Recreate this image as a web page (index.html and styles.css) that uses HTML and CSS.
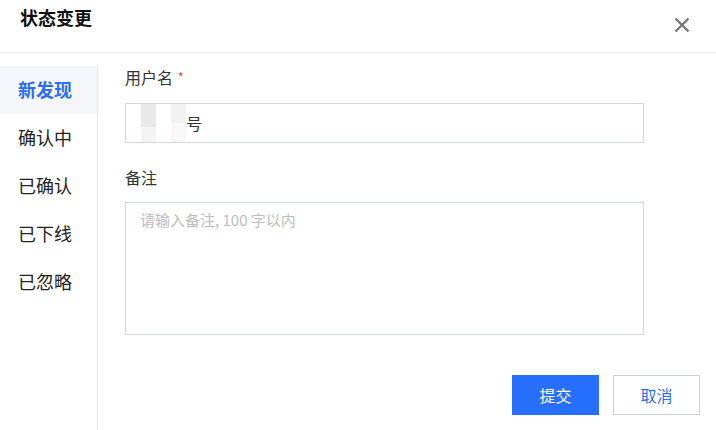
FILE: index.html
```html
<!DOCTYPE html>
<html lang="zh">
<head>
<meta charset="utf-8">
<title>状态变更</title>
<link rel="stylesheet" href="styles.css">
</head>
<body>
<div class="dialog">
  <div class="header">
    <div class="title">状态变更</div>
    <button class="close" aria-label="关闭">
      <svg width="16" height="16" viewBox="0 0 16 16"><path d="M1.5 1.5 L14.5 14.5 M14.5 1.5 L1.5 14.5" stroke="#777" stroke-width="2.4" stroke-linecap="butt" fill="none"/></svg>
    </button>
  </div>
  <div class="body">
    <div class="sidebar">
      <div class="tab active">新发现</div>
      <div class="tab">确认中</div>
      <div class="tab">已确认</div>
      <div class="tab">已下线</div>
      <div class="tab">已忽略</div>
    </div>
    <div class="main">
      <div class="label">用户名<span class="req">*</span></div>
      <div class="input">
        <span class="mask mask1"></span><span class="mask mask2"></span><span class="val">号</span>
      </div>
      <div class="label label2">备注</div>
      <div class="textarea"><span class="ph">请输入备注, 100 字以内</span></div>
      <div class="actions">
        <button class="btn primary">提交</button>
        <button class="btn secondary">取消</button>
      </div>
    </div>
  </div>
</div>
</body>
</html>
```
FILE: styles.css
```css
* { box-sizing: border-box; }
html, body { margin: 0; padding: 0; background: #fff; }
body {
  width: 716px;
  height: 430px;
  overflow: hidden;
  font-family: "PingFang SC", "Noto Sans CJK SC", "Noto Sans", sans-serif;
  color: #222;
}
.dialog { width: 716px; height: 430px; display: flex; flex-direction: column; }
.header {
  height: 53px;
  border-bottom: 1px solid #e7e9ee;
  display: flex;
  justify-content: space-between;
  align-items: flex-start;
  flex-shrink: 0;
}
.title {
  font-size: 18px;
  font-weight: 700;
  line-height: 26px;
  padding: 4px 0 0 20px;
  color: #111;
}
.close {
  border: 0;
  background: none;
  padding: 0;
  margin: 17px 26px 0 0;
  width: 16px;
  height: 16px;
  display: flex;
}
.body { flex: 1; display: flex; min-height: 0; }
.sidebar {
  width: 98px;
  margin-top: 13px;
  border-right: 1px solid #e8eaee;
  flex-shrink: 0;
}
.tab {
  height: 48px;
  line-height: 46px;
  padding-left: 18px;
  font-size: 18px;
  color: #222;
}
.tab.active {
  background: #f5f6f9;
  color: #2b6ef5;
  font-weight: 700;
}
.main {
  flex: 1;
  padding: 15px 16px 0 27px;
  display: flex;
  flex-direction: column;
}
.label {
  font-size: 16px;
  line-height: 18px;
  color: #333;
  height: 22px;
}
.req {
  color: #e54545;
  font-size: 12px;
  margin-left: 5px;
  vertical-align: 2px;
}
.input {
  margin-top: 13px;
  width: 519px;
  height: 40px;
  border: 1px solid #d3d7df;
  display: flex;
  align-items: center;
  padding-left: 15px;
  font-size: 16px;
  color: #333;
}
.mask {
  display: block;
  width: 15px;
  height: 38px;
  background: linear-gradient(#e9e9e9 0 60%, #f4f4f4 60% 100%);
}
.mask2 {
  margin-left: 15px;
  background: linear-gradient(#f2f2f2 0 50%, #f8f8f8 50% 100%);
}
.val { line-height: 22px; }
.label2 { margin-top: 25px; }
.textarea {
  margin-top: 12px;
  width: 519px;
  height: 133px;
  border: 1px solid #d3d7df;
  padding: 6px 14px;
  font-size: 15px;
  line-height: 22px;
}
.ph { color: #bdbdbd; }
.actions {
  margin-top: 40px;
  display: flex;
  justify-content: flex-end;
  gap: 14px;
}
.btn {
  width: 87px;
  height: 40px;
  font-family: inherit;
  font-size: 16px;
  border-radius: 0;
  padding: 0;
}
.primary { background: #266fff; color: #fff; border: 0; }
.secondary { background: #fff; color: #2b6ef5; border: 1px solid #ccd1da; }
```
